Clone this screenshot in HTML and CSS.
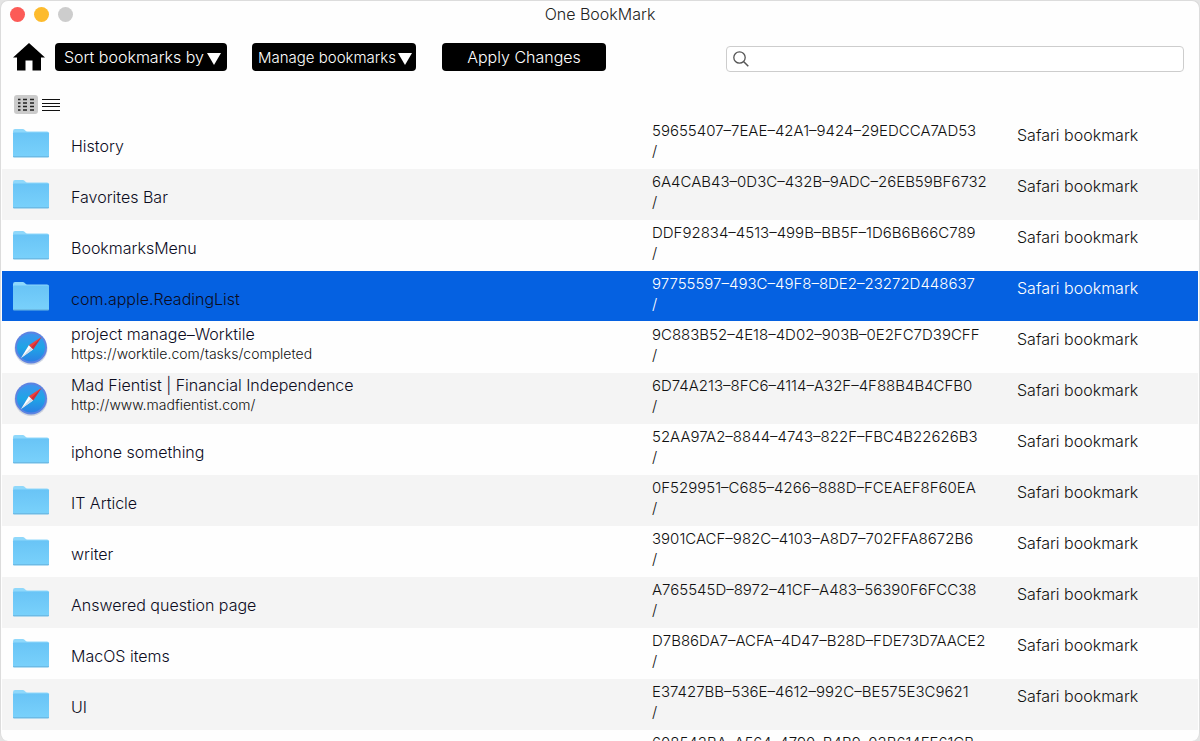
FILE: index.html
```html
<!DOCTYPE html>
<html lang="en">
<head>
<meta charset="utf-8">
<title>One BookMark</title>
<link rel="stylesheet" href="styles.css">
</head>
<body>
<svg class="sprite" aria-hidden="true">
  <defs>
    <linearGradient id="folder-front" x1="0" y1="0" x2="0" y2="1">
      <stop offset="0" stop-color="#69c4f6"/>
      <stop offset="1" stop-color="#79d1fb"/>
    </linearGradient>
    <linearGradient id="compass-face" x1="0" y1="0" x2="0" y2="1">
      <stop offset="0" stop-color="#3f93ee"/>
      <stop offset="0.5" stop-color="#1fa5e6"/>
      <stop offset="1" stop-color="#2b7fe4"/>
    </linearGradient>
    <symbol id="folder" viewBox="0 0 38 30">
      <path d="M1 3.200Q1 1 3 1H10.500Q12 1 13 2.200T15.500 3.400H35Q37 3.400 37 5.400V10H1Z" fill="#8fd8fb"/>
      <rect x="1" y="4.500" width="36" height="24.500" rx="1" fill="url(#folder-front)"/>
      <path d="M1 28H37V28.500Q37 29.500 36 29.500H2Q1 29.500 1 28.500Z" fill="#6cbbe6"/>
    </symbol>
    <symbol id="compass" viewBox="0 0 36 36">
      <circle cx="18" cy="18.500" r="16.500" fill="#7f8fb0" opacity="0.350"/>
      <circle cx="18" cy="17.500" r="16" fill="#5c83e2"/>
      <circle cx="18" cy="17.500" r="14" fill="url(#compass-face)"/>
      <path d="M28.500 7L15.800 15.300L20 19.600Z" fill="#f0403c"/>
      <path d="M28.500 7L17.900 17.500L20 19.600Z" fill="#c9303a"/>
      <path d="M8 28L15.800 15.300L20 19.600Z" fill="#fff"/>
      <path d="M8 28L17.900 17.500L20 19.600Z" fill="#cfdbe8"/>
    </symbol>
  </defs>
</svg>

<main class="window">
  <header class="titlebar">
    <div class="lights">
      <button class="light light-close" aria-label="Close"></button>
      <button class="light light-minimize" aria-label="Minimize"></button>
      <button class="light light-zoom" aria-label="Zoom"></button>
    </div>
    <h1 class="title">One BookMark</h1>
  </header>

  <div class="toolbar">
    <button class="home" aria-label="Home">
      <svg width="32" height="28" viewBox="0 0 32 28"><path d="M16 0L32 14.500H28V27.500H19.500V17.500H12.500V27.500H4V14.500H0Z" fill="#000"/></svg>
    </button>
    <button class="action action-sort">Sort bookmarks by <svg class="caret" width="14" height="12" viewBox="0 0 14 12"><path d="M0 0H14L7 12Z" fill="#fff"/></svg></button>
    <button class="action action-manage">Manage bookmarks <svg class="caret" width="14" height="12" viewBox="0 0 14 12"><path d="M0 0H14L7 12Z" fill="#fff"/></svg></button>
    <button class="action action-apply">Apply Changes</button>
    <label class="search">
      <svg width="16" height="16" viewBox="0 0 16 16"><circle cx="6.500" cy="6.500" r="5.700" fill="none" stroke="#555" stroke-width="1.300"/><path d="M10.500 10.500L15.300 15.300" stroke="#555" stroke-width="1.500"/></svg>
      <input class="search-input" type="search" aria-label="Search bookmarks">
    </label>
  </div>

  <div class="views">
    <button class="view view-active" aria-label="Grid view">
      <svg width="18" height="14" viewBox="0 0 18 14"><g fill="none" stroke="#222" stroke-width="1.400"><path d="M1 1.500H3.500M1 5H3.500M1 8.500H3.500M1 12H3.500"/><path d="M6 1.500H10M6 5H10M6 8.500H10M6 12H10M13 1.500H17M13 5H17M13 8.500H17M13 12H17"/></g></svg>
    </button>
    <button class="view" aria-label="List view">
      <svg width="18" height="14" viewBox="0 0 18 14"><path d="M0 1.500H18M0 5.500H18M0 8.500H18M0 12.500H18" stroke="#111" stroke-width="1.200"/></svg>
    </button>
  </div>

  <table class="bookmarks">
    <colgroup><col class="col-icon"><col><col class="col-id"><col class="col-type"></colgroup>
    <tbody>
      <tr><td class="icon"><svg class="folder"><use href="#folder"/></svg></td><td class="name">History</td><td class="id">59655407–7EAE–42A1–9424–29EDCCA7AD53<br>/</td><td class="type">Safari bookmark</td></tr>
      <tr><td class="icon"><svg class="folder"><use href="#folder"/></svg></td><td class="name">Favorites Bar</td><td class="id">6A4CAB43–0D3C–432B–9ADC–26EB59BF6732<br>/</td><td class="type">Safari bookmark</td></tr>
      <tr><td class="icon"><svg class="folder"><use href="#folder"/></svg></td><td class="name">BookmarksMenu</td><td class="id">DDF92834–4513–499B–BB5F–1D6B6B66C789<br>/</td><td class="type">Safari bookmark</td></tr>
      <tr class="selected"><td class="icon"><svg class="folder"><use href="#folder"/></svg></td><td class="name">com.apple.ReadingList</td><td class="id">97755597–493C–49F8–8DE2–23272D448637<br>/</td><td class="type">Safari bookmark</td></tr>
      <tr><td class="icon icon-page"><svg class="compass"><use href="#compass"/></svg></td><td class="name page">project manage–Worktile<span class="url">https://worktile.com/tasks/completed</span></td><td class="id">9C883B52–4E18–4D02–903B–0E2FC7D39CFF<br>/</td><td class="type">Safari bookmark</td></tr>
      <tr><td class="icon icon-page"><svg class="compass"><use href="#compass"/></svg></td><td class="name page">Mad Fientist | Financial Independence<span class="url">http://www.madfientist.com/</span></td><td class="id">6D74A213–8FC6–4114–A32F–4F88B4B4CFB0<br>/</td><td class="type">Safari bookmark</td></tr>
      <tr><td class="icon"><svg class="folder"><use href="#folder"/></svg></td><td class="name">iphone something</td><td class="id">52AA97A2–8844–4743–822F–FBC4B22626B3<br>/</td><td class="type">Safari bookmark</td></tr>
      <tr><td class="icon"><svg class="folder"><use href="#folder"/></svg></td><td class="name">IT Article</td><td class="id">0F529951–C685–4266–888D–FCEAEF8F60EA<br>/</td><td class="type">Safari bookmark</td></tr>
      <tr><td class="icon"><svg class="folder"><use href="#folder"/></svg></td><td class="name">writer</td><td class="id">3901CACF–982C–4103–A8D7–702FFA8672B6<br>/</td><td class="type">Safari bookmark</td></tr>
      <tr><td class="icon"><svg class="folder"><use href="#folder"/></svg></td><td class="name">Answered question page</td><td class="id">A765545D–8972–41CF–A483–56390F6FCC38<br>/</td><td class="type">Safari bookmark</td></tr>
      <tr><td class="icon"><svg class="folder"><use href="#folder"/></svg></td><td class="name">MacOS items</td><td class="id">D7B86DA7–ACFA–4D47–B28D–FDE73D7AACE2<br>/</td><td class="type">Safari bookmark</td></tr>
      <tr><td class="icon"><svg class="folder"><use href="#folder"/></svg></td><td class="name">UI</td><td class="id">E37427BB–536E–4612–992C–BE575E3C9621<br>/</td><td class="type">Safari bookmark</td></tr>
      <tr><td class="icon"><svg class="folder"><use href="#folder"/></svg></td><td class="name"></td><td class="id">608542BA–A564–4790–B4B9–02B614FF61CB<br>/</td><td class="type">Safari bookmark</td></tr>
    </tbody>
  </table>
</main>
</body>
</html>
```

FILE: styles.css
```css
* { box-sizing: border-box; }

body {
  margin: 0;
  background: #e4e4e4;
  color: #111;
  font-family: Inter, "Liberation Sans", sans-serif;
  font-size: 16px;
  font-weight: 300;
}

button {
  padding: 0;
  border: 0;
  background: none;
  font: inherit;
}

svg { display: block; }

.sprite {
  position: absolute;
  width: 0;
  height: 0;
}

.window {
  display: flex;
  flex-direction: column;
  height: 100vh;
  overflow: hidden;
  border: 1px solid #dcdcdc;
  border-bottom: 0;
  border-radius: 8px;
  background: #fefefe;
}

.titlebar {
  display: grid;
  grid-template-columns: 1fr auto 1fr;
  align-items: center;
  flex: none;
  height: 26px;
  padding: 0 9px;
}

.lights {
  display: flex;
  gap: 9px;
}

.light {
  width: 15px;
  height: 15px;
  border-radius: 50%;
}

.light-close { background: #fc5b57; }
.light-minimize { background: #fdbb2d; }
.light-zoom { background: #cdcdcd; }

.title {
  margin: 0;
  color: #222;
  font-size: 16px;
  font-weight: 300;
  line-height: 20px;
}

.toolbar {
  display: flex;
  align-items: center;
  flex: none;
  padding: 15px 15px 0 12px;
}

.home { margin-right: 10px; }

.action {
  display: flex;
  align-items: center;
  justify-content: center;
  width: 164px;
  height: 28px;
  border-radius: 4px;
  background: #000;
  color: #fff;
  font-size: 16px;
  white-space: nowrap;
}

.action-sort {
  gap: 3px;
  width: 172px;
  margin-right: 25px;
  padding-left: 3px;
}

.action-manage {
  gap: 2px;
  margin-right: 26px;
  padding-left: 2px;
  font-size: 15px;
}

.action-apply { margin-right: 120px; }

.caret { margin-top: 3px; }

.search {
  display: flex;
  align-items: center;
  flex: 1;
  gap: 8px;
  height: 26px;
  margin-top: 4px;
  padding: 0 6px;
  border: 1px solid #cdcdcd;
  border-radius: 4px;
  background: #fff;
}

.search-input {
  flex: 1;
  min-width: 0;
  border: 0;
  outline: 0;
  background: none;
  font: inherit;
}

.views {
  display: flex;
  flex: none;
  gap: 1px;
  padding: 23px 13px 4px;
}

.view {
  display: grid;
  place-items: center;
  width: 24px;
  height: 19px;
  border-radius: 3px;
}

.view-active { background: #cbcbcb; }

.bookmarks {
  width: 100%;
  padding: 0 1px;
  table-layout: fixed;
  border-spacing: 0;
}

.col-icon { width: 69px; }
.col-id { width: 365px; }
.col-type { width: 181px; }

.bookmarks tr { height: 51px; }
.bookmarks tr:nth-child(even) { background: #f4f4f4; }

.bookmarks tr.selected {
  background: #0561e1;
  color: #fff;
}

.bookmarks td {
  padding: 0;
  vertical-align: top;
}

.bookmarks .selected td { border-bottom: 1px solid #fefefe; }

.bookmarks .icon { padding: 10px 0 0 10px; }
.bookmarks .icon-page { padding: 8px 0 0 11px; }

.folder {
  width: 38px;
  height: 30px;
}

.compass {
  width: 36px;
  height: 36px;
}

.bookmarks .name {
  padding-top: 18px;
  color: #0c0c1e;
  line-height: 20px;
}

.bookmarks .page { padding-top: 2px; }

.url {
  display: block;
  color: #111;
  font-size: 14px;
}

.bookmarks .id {
  padding-top: 3px;
  font-size: 15px;
  line-height: 20px;
}

.bookmarks .type {
  padding-top: 7px;
  line-height: 20px;
}
```
